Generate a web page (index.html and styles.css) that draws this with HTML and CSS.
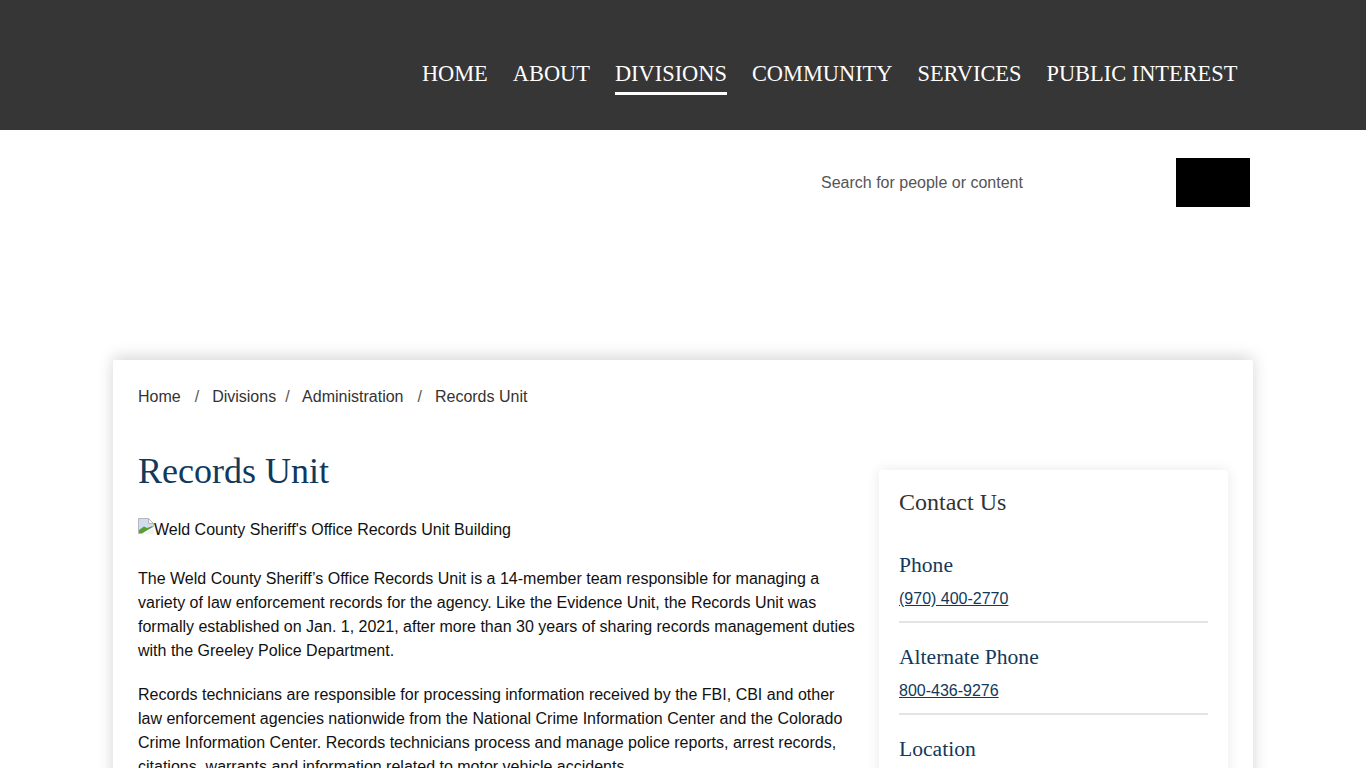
FILE: index.html
```html
<!DOCTYPE html>
<html lang="en">
<head>
<meta charset="utf-8">
<title>Records Unit</title>
<link rel="stylesheet" href="styles.css">
</head>
<body>
<header class="topbar">
  <nav class="mainnav">
    <a href="#">HOME</a>
    <a href="#">ABOUT</a>
    <a href="#" class="active">DIVISIONS</a>
    <a href="#">COMMUNITY</a>
    <a href="#">SERVICES</a>
    <a href="#">PUBLIC INTEREST</a>
  </nav>
</header>
<div class="searchrow">
  <input class="searchinput" type="text" placeholder="Search for people or content">
  <button class="searchbtn" type="button" aria-label="Search"></button>
</div>
<main class="card">
  <ol class="crumbs">
    <li><a href="#">Home</a></li>
    <li class="sep s1">/</li>
    <li><a href="#">Divisions</a></li>
    <li class="sep s2">/</li>
    <li><a href="#">Administration</a></li>
    <li class="sep s1">/</li>
    <li>Records Unit</li>
  </ol>
  <div class="columns">
    <article class="content">
      <h1>Records Unit</h1>
      <div class="brokenimg">
        <svg class="brokenicon" width="16" height="16" viewBox="0 0 16 16" aria-hidden="true">
          <path d="M0.5 0.5H10.5L15.5 5.5V8.5L0.5 15.5Z" fill="#d0dcf0" stroke="#b8b8b8"/>
          <path d="M10.5 0.5V5.5H15.5Z" fill="#f4f6fa" stroke="#b8b8b8"/>
          <path d="M1 15.5V12L6 8.5L9 10L14.5 8L14.5 9L4 15.5Z" fill="#58a035"/>
          <path d="M5 16L15.5 10.5V16Z" fill="#f0f3ec"/>
        </svg><span>Weld County Sheriff's Office Records Unit Building</span>
      </div>
      <p>The Weld County Sheriff’s Office Records Unit is a 14-member team responsible for managing a variety of law enforcement records for the agency. Like the Evidence Unit, the Records Unit was formally established on Jan. 1, 2021, after more than 30 years of sharing records management duties with the Greeley Police Department.</p>
      <p>Records technicians are responsible for processing information received by the FBI, CBI and other law enforcement agencies nationwide from the National Crime Information Center and the Colorado Crime Information Center. Records technicians process and manage police reports, arrest records, citations, warrants and information related to motor vehicle accidents.</p>
    </article>
    <aside class="contact">
      <h2>Contact Us</h2>
      <section class="item">
        <h3>Phone</h3>
        <a href="#">(970) 400-2770</a>
      </section>
      <section class="item">
        <h3>Alternate Phone</h3>
        <a href="#">800-436-9276</a>
      </section>
      <section class="item">
        <h3>Location</h3>
      </section>
    </aside>
  </div>
</main>
</body>
</html>
```
FILE: styles.css
```css
* { box-sizing: border-box; }
html, body { margin: 0; padding: 0; height: 768px; overflow: hidden; background: #fff; }
body { font-family: "Liberation Sans", Arial, sans-serif; font-size: 16px; color: #111; }
.topbar { height: 130px; background: #363636; display: flex; justify-content: flex-end; padding: 59px 128.6px 0 0; }
.mainnav { display: flex; gap: 25px; align-items: flex-start; }
.mainnav a { font-family: "Liberation Serif", "Times New Roman", serif; font-size: 22.4px; line-height: 29px; color: #fff; text-decoration: none; padding-bottom: 4px; display: block; height: 36px; }
.mainnav a.active { border-bottom: 3px solid #fff; }
.searchrow { display: flex; justify-content: flex-end; padding: 28px 116px 0 0; height: 230px; }
.searchinput { width: 355px; height: 49px; border: 0; outline: 0; padding: 0; font: 16px "Liberation Sans", Arial, sans-serif; color: #555; background: transparent; }
.searchinput::placeholder { color: #555; opacity: 1; }
.searchbtn { width: 74px; height: 49px; background: #000; border: 0; padding: 0; }
.card { width: 1140px; margin-left: 113px; height: 800px; background: #fff; box-shadow: 0 -3px 16px rgba(0,0,0,.17); padding: 25px 25px 0; border-radius: 2px; }
.crumbs { list-style: none; display: flex; margin: 0; padding: 0; line-height: 24px; color: #333; }
.crumbs a { color: #333; text-decoration: none; }
.sep { color: #555; }
.s1 { margin: 0 13px 0 14px; }
.s2 { margin: 0 12.5px 0 9px; }
.columns { display: flex; gap: 22px; align-items: flex-start; margin-top: 40px; }
.content { width: 719px; flex: none; }
h1 { font-family: "Liberation Serif", "Times New Roman", serif; font-weight: 400; font-size: 36px; line-height: 44px; color: #12395b; margin: 0 0 25px; }
.brokenimg { height: 24px; line-height: 24px; display: flex; align-items: flex-start; margin-bottom: 25px; }
.brokenicon { flex: none; margin-top: 0; }
.content p { margin: 0 0 20px; line-height: 24px; color: #111; }
.contact { width: 349px; flex: none; margin-top: 21px; padding: 18px 20px 20px; background: #fff; box-shadow: 0 0 14px rgba(0,0,0,.09); border-radius: 3px; }
.contact h2 { font-family: "Liberation Serif", "Times New Roman", serif; font-weight: 400; font-size: 24px; line-height: 28px; color: #333; margin: 0 0 35px; }
.item { border-bottom: 2px solid #e4e4e4; padding-bottom: 10px; margin-bottom: 20px; }
.item h3 { font-family: "Liberation Serif", "Times New Roman", serif; font-weight: 400; font-size: 21.6px; line-height: 28px; color: #12395b; margin: 0 0 8px; }
.item a { color: #12395b; line-height: 24px; display: inline-block; }
```
